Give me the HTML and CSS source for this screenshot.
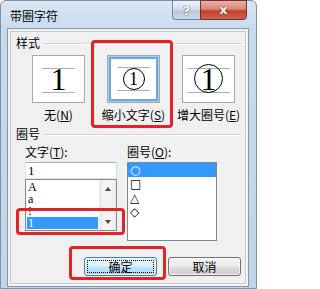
FILE: index.html
```html
<!DOCTYPE html>
<html lang="zh-CN">
<head>
<meta charset="utf-8">
<title>带圈字符</title>
<link rel="stylesheet" href="styles.css">
</head>
<body>
<div class="window">
  <div class="titlebar">
    <span class="title">带圈字符</span>
    <div class="caption-btns">
      <div class="cap-btn cap-help">?</div>
      <div class="cap-btn cap-close">x</div>
    </div>
  </div>
  <div class="client">
    <div class="panel">
      <div class="section-head"><span class="section-label">样式</span><i class="rule"></i></div>
      <div class="styles">
        <div class="opt">
          <div class="preview">
            <div class="guides guides-plain"><span class="digit">1</span></div>
          </div>
          <div class="opt-label">无(<u>N</u>)</div>
        </div>
        <div class="opt">
          <div class="preview preview-selected">
            <div class="guides guides-small"><span class="ring ring-small"><span class="digit-small">1</span></span></div>
          </div>
          <div class="opt-label">缩小文字(<u>S</u>)</div>
        </div>
        <div class="opt">
          <div class="preview">
            <div class="guides guides-big"><span class="ring ring-big"><span class="digit-big">1</span></span></div>
          </div>
          <div class="opt-label">增大圈号(<u>E</u>)</div>
        </div>
      </div>
      <div class="section-head section-head-2"><span class="section-label">圈号</span><i class="rule"></i></div>
      <div class="cols">
        <div class="col col-left">
          <div class="field-label">文字(<u>T</u>):</div>
          <div class="edit">1</div>
          <div class="list list-text">
            <div class="items">
              <div class="item">A</div>
              <div class="item">a</div>
              <div class="item">!</div>
              <div class="item item-selected">1</div>
            </div>
            <div class="vscroll">
              <div class="sbtn"><span class="arrow arrow-up"></span></div>
              <div class="sbtn"><span class="arrow arrow-down"></span></div>
            </div>
          </div>
        </div>
        <div class="col col-right">
          <div class="field-label">圈号(<u>O</u>):</div>
          <div class="list list-shape">
            <div class="shape shape-selected">○</div>
            <div class="shape">□</div>
            <div class="shape">△</div>
            <div class="shape">◇</div>
          </div>
        </div>
      </div>
      <div class="buttons">
        <div class="btn btn-default"><span class="focus">确定</span></div>
        <div class="btn">取消</div>
      </div>
    </div>
  </div>
  <div class="mark mark-style"></div>
  <div class="mark mark-list"></div>
  <div class="mark mark-ok"></div>
</div>
</body>
</html>
```

FILE: styles.css
```css
* { box-sizing: border-box; }
html, body { margin: 0; padding: 0; }
body {
  width: 257px;
  height: 289px;
  overflow: hidden;
  background: #ffffff;
  font-family: "Noto Sans CJK SC", "Noto Sans", sans-serif;
  font-size: 12px;
  color: #000;
}
u { text-decoration: underline; text-underline-offset: 1px; }

.window {
  position: relative;
  width: 257px;
  height: 289px;
  border: 1px solid #7d90a8;
  border-radius: 6px 6px 0 0;
  background: linear-gradient(#dae6f3, #c9daed 30px, #c0d4ea);
  display: flex;
  flex-direction: column;
}

.titlebar {
  height: 27px;
  flex: none;
  display: flex;
  justify-content: space-between;
  align-items: flex-start;
  padding: 0 9px;
}
.title {
  margin-top: 9px;
  line-height: 12px;
  font-size: 12px;
}
.caption-btns {
  display: flex;
  margin-top: -1px;
}
.cap-btn {
  height: 20px;
  display: flex;
  align-items: center;
  justify-content: center;
  color: #fff;
  font-family: "DejaVu Sans", sans-serif;
  font-weight: bold;
}
.cap-help {
  width: 28px;
  border: 1px solid #74869c;
  border-right: none;
  border-radius: 0 0 0 4px;
  background: linear-gradient(#eef3f8, #d6e0eb 45%, #b9c8d9 55%, #cbd8e6);
  font-size: 13px;
  text-shadow: 0 0 1px #3d4b5c, 0 0 1px #3d4b5c;
}
.cap-close {
  width: 47px;
  border: 1px solid #6b3232;
  border-radius: 0 0 4px 0;
  background: linear-gradient(#eab1a8, #d98577 45%, #c4402f 55%, #d0604f);
  font-size: 13px;
  padding-bottom: 2px;
  text-shadow: 0 0 1px #4a1a14, 0 0 1px #4a1a14;
}

.client {
  flex: 1;
  margin: 0 7px 1px 6px;
  border: 1px solid #8397ae;
  background: #f0f0f0;
  padding: 2px;
}
.panel {
  height: 100%;
  border: 1px solid #c9c9c9;
  box-shadow: 1px 1px 0 #ffffff;
  display: flex;
  flex-direction: column;
}

.section-head {
  margin-top: 5px;
  height: 12px;
  display: flex;
  align-items: center;
  padding: 0 4px 0 5px;
}
.section-head-2 { margin-top: 7px; }
.section-label { line-height: 12px; }
.rule {
  flex: 1;
  height: 1px;
  margin-left: 4px;
  background: #d5d5d5;
  box-shadow: 0 1px 0 #ffffff;
}

.styles {
  margin-top: 6px;
  padding-left: 10px;
  display: grid;
  grid-template-columns: repeat(3, 75px);
  justify-items: center;
}
.opt { display: flex; flex-direction: column; align-items: center; }
.preview {
  width: 53px;
  height: 48px;
  background: #fff;
  border: 1px solid #a9a9a9;
}
.preview-selected {
  box-shadow: inset 0 0 0 1px #a6cdee, inset 0 0 0 3px #6fa9dc;
}
.guides {
  width: 33px;
  margin: 12px auto 0;
  border-top: 1px solid #b0b0b0;
  border-bottom: 1px solid #b0b0b0;
}
.guides-plain { height: 25px; }
.guides-small {
  margin-top: 11px;
  height: 24px;
  display: flex;
  justify-content: center;
}
.guides-big {
  width: 43px;
  height: 25px;
  display: flex;
  justify-content: center;
}
.digit {
  display: block;
  text-align: center;
  font-family: "Liberation Serif", serif;
  font-size: 32px;
  line-height: 20px;
}
.ring {
  flex: none;
  display: flex;
  align-items: center;
  justify-content: center;
  border: 1.3px solid #000;
  border-radius: 50%;
}
.ring-small { width: 22px; height: 22px; }
.ring-big { width: 29px; height: 29px; margin-top: -5px; }
.digit-small {
  font-family: "Liberation Serif", serif;
  font-size: 18px;
  line-height: 18px;
}
.digit-big {
  font-family: "Liberation Serif", serif;
  font-size: 32px;
  line-height: 20px;
}
.opt-label {
  margin-top: 6px;
  line-height: 12px;
  white-space: nowrap;
}

.cols {
  margin-top: 5px;
  display: flex;
  gap: 10px;
  padding-left: 14px;
}
.col { display: flex; flex-direction: column; }
.col-left { width: 92px; }
.col-right { width: 90px; }
.field-label {
  line-height: 13px;
  margin-bottom: 4px;
  white-space: nowrap;
}
.edit {
  height: 17px;
  border: 1px solid #abadb3;
  border-color: #abadb3 #dbdfe6 #e3e9ef #e2e3ea;
  background: #fff;
  padding-left: 2px;
  font-family: "Liberation Serif", serif;
  font-size: 13px;
  line-height: 15px;
}
.list {
  border: 1px solid #828790;
  background: #fff;
}
.list-text {
  height: 52px;
  display: flex;
}
.items {
  flex: 1;
  padding-top: 1px;
}
.item {
  height: 12px;
  line-height: 12px;
  margin: 0 1px;
  padding-left: 1px;
  font-family: "Liberation Serif", serif;
  font-size: 12px;
}
.item-selected {
  background: #3399ff;
  color: #fff;
}
.vscroll {
  width: 17px;
  background: linear-gradient(90deg, #e6e6e6, #f4f4f4 30%, #f4f4f4 70%, #ebebeb);
  display: flex;
  flex-direction: column;
  justify-content: space-between;
}
.sbtn {
  height: 17px;
  display: flex;
  align-items: center;
  justify-content: center;
}
.arrow {
  width: 0;
  height: 0;
  border-left: 3.5px solid transparent;
  border-right: 3.5px solid transparent;
}
.arrow-up { border-bottom: 4px solid #4a4a4a; }
.arrow-down { border-top: 4px solid #4a4a4a; }

.list-shape {
  height: 79px;
}
.shape {
  height: 14px;
  line-height: 14px;
  padding-left: 2px;
  font-family: "DejaVu Sans", sans-serif;
  font-size: 12px;
}
.shape-selected {
  background: #3399ff;
  color: #fff;
}

.buttons {
  margin-top: 16px;
  display: flex;
  justify-content: flex-end;
  gap: 11px;
  padding-right: 4px;
}
.btn {
  width: 73px;
  height: 19px;
  border: 1px solid #707070;
  border-radius: 3px;
  background: linear-gradient(#f2f2f2, #ebebeb 50%, #dddddd 50%, #cfcfcf);
  box-shadow: inset 0 0 0 1px rgba(255,255,255,0.7);
  display: flex;
  align-items: center;
  justify-content: center;
  line-height: 12px;
}
.btn-default {
  border-color: #3c7fb1;
  background: linear-gradient(#eaf6fd, #d9f0fc 50%, #bee6fd 50%, #a7d9f5);
  padding: 2px;
}
.focus {
  flex: 1;
  align-self: stretch;
  border: 1px dotted #000;
  display: flex;
  align-items: center;
  justify-content: center;
}

.mark {
  position: absolute;
  border: 3px solid #e2232a;
  border-radius: 4px;
}
.mark-style { left: 90px; top: 39px; width: 82px; height: 88px; }
.mark-list { left: 15px; top: 207px; width: 109px; height: 27px; }
.mark-ok { left: 68px; top: 245px; width: 97px; height: 34px; }
```
